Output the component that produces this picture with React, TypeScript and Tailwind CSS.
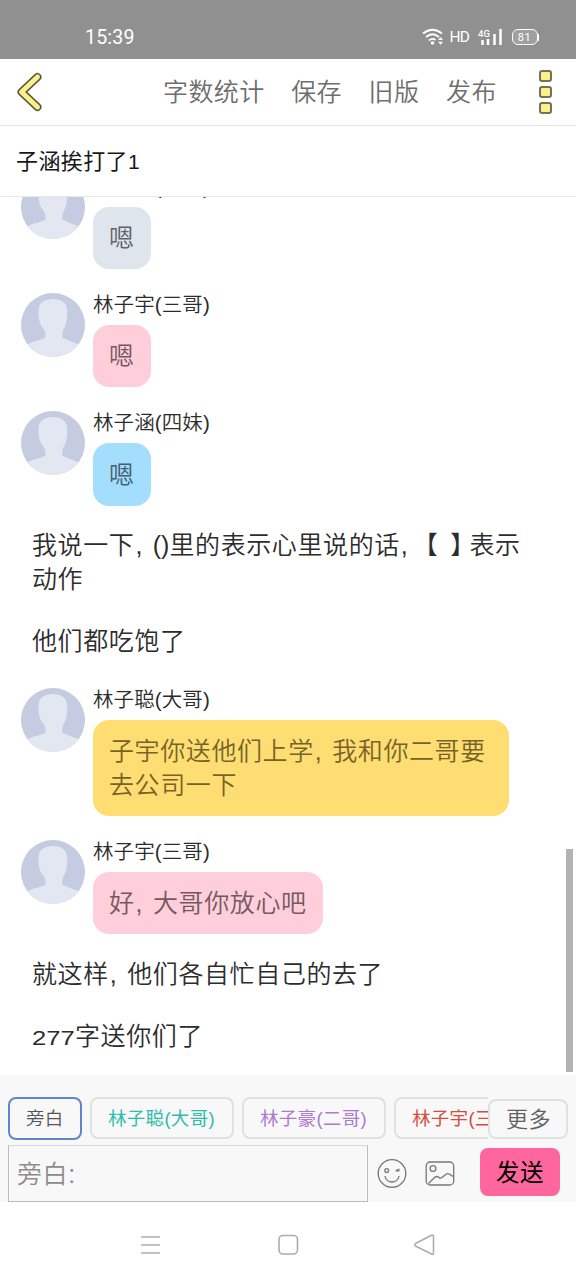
import React from "react";

const Comma = () => <span className="inline-block w-[18.4px] pl-[1px] tracking-normal">,</span>;

const Avatar = () => (
  <svg className="size-16 shrink-0" viewBox="0 0 64 64">
    <defs>
      <clipPath id="avatarDisc">
        <circle cx="32" cy="32" r="32" />
      </clipPath>
    </defs>
    <g clipPath="url(#avatarDisc)">
      <rect width="64" height="64" fill="#c5cce2" />
      <path
        d="M32 6C24 6 18 9.500 17.500 17C17.200 24 18.500 31 21.500 34.500C24.500 38 24.500 41 24.500 44.500C20 47.500 13 47.500 6 51.500V64H58V51.500C52 49 47 47.500 41.300 44.500C41.300 41 41.300 38 43.500 34.500C45.500 31 46.500 24 46.200 17C45.500 9.500 40 6 32 6Z"
        fill="#e3e7f2"
      />
    </g>
  </svg>
);

function Message({ name, tone, children }: { name: string; tone: string; children: React.ReactNode }) {
  return (
    <div className="flex gap-2 pl-[21px]">
      <Avatar />
      <div>
        <div className="h-8 text-[20.500px] leading-[24px] font-[350] tracking-[0.100px] text-[#2c2c2c]">{name}</div>
        <div
          className={`w-fit rounded-[16px] px-4 pt-[15.200px] pb-[13.600px] text-[25px] leading-[33.6px] font-[350] tracking-[0.6px] ${tone}`}
        >
          {children}
        </div>
      </div>
    </div>
  );
}

const Narration = ({ children }: { children: React.ReactNode }) => (
  <div className="-mb-px pt-px pl-8 text-[25px] leading-[33.6px] font-[350] tracking-[0.6px] whitespace-nowrap text-[#2c2c2c]">
    {children}
  </div>
);

function StatusBar() {
  return (
    <div className="flex h-[59px] shrink-0 items-center bg-[#909090] pt-[15px] pr-[36px] pl-[85px] text-white">
      <span className="pt-px font-[Roboto] text-[19.500px] leading-6 tracking-[0.2px]">15:39</span>
      <svg className="ml-auto h-[18px] w-[22px]" viewBox="0 0 22 18" fill="none" stroke="white" strokeWidth="1.8">
        <path d="M1 5.500Q10.500-2 20 5.500M4 9Q10.500 3.500 17 9M7 12.500Q10.500 9.500 13.500 12" />
        <circle cx="10.500" cy="15" r="1.800" fill="white" stroke="none" />
        <path d="M16 12L18.500 9L21 12ZM16 13.800L18.500 16.800L21 13.800Z" fill="white" stroke="none" />
      </svg>
      <span className="ml-[6px] w-[20px] font-[Roboto] text-[15.500px] leading-5 tracking-[-0.800px]">HD</span>
      <svg className="ml-[8px] h-[18px] w-[26px]" viewBox="0 0 26 18">
        <text x="0" y="8.500" fontFamily="Roboto" fontSize="9.500" fontWeight="500" fill="white">
          4G
        </text>
        <path d="M4.500 12V17M10 11V17M16.500 6V17M22.500 1V17" stroke="white" strokeWidth="2.500" />
      </svg>
      <div className="ml-[8px] flex h-[16px] w-[26px] items-center justify-center rounded-[6px] border-[1.500px] border-white bg-[#a0a0a0] font-[Roboto] text-[11px] leading-none tracking-[0.5px]">
        81
      </div>
      <div className="mr-px h-[7px] w-[1.500px] bg-white" />
    </div>
  );
}

function Header() {
  return (
    <div className="flex h-[67px] shrink-0 items-center border-b border-[#e6e6e6] pr-[22px] pl-[16px] text-[25px] font-[350] tracking-[0.400px] text-[#6e6e6e]">
      <svg className="h-[40px] w-[28px]" viewBox="0 0 28 40" fill="none" strokeLinecap="round" strokeLinejoin="round">
        <path d="M21.500 5L5.500 20L21.500 35" stroke="#5b573e" strokeWidth="8" />
        <path d="M21.500 5L5.500 20L21.500 35" stroke="#fbf18a" strokeWidth="5" />
      </svg>
      <div className="ml-[119px] flex gap-[26.600px] leading-8">
        <span>字数统计</span>
        <span>保存</span>
        <span>旧版</span>
        <span>发布</span>
      </div>
      <div className="ml-auto flex w-[18px] flex-col items-center gap-[4px]">
        <i className="h-[12px] w-[13px] rounded-[3px] border-2 border-[#757158] bg-[#fbf18a]" />
        <i className="h-[12px] w-[13px] rounded-[3px] border-2 border-[#757158] bg-[#fbf18a]" />
        <i className="h-[12px] w-[13px] rounded-[3px] border-2 border-[#757158] bg-[#fbf18a]" />
      </div>
    </div>
  );
}

function Composer() {
  return (
    <div className="h-[127px] shrink-0 bg-[#f8f8f8] pl-2">
      <div className="flex h-[70px] pt-[22px] pr-2">
        <div className="flex w-[480px] gap-2 overflow-hidden text-[18.500px] leading-[40px] tracking-[0.300px] whitespace-nowrap">
          <div className="h-[43px] w-[74px] shrink-0 rounded-[8px] border-2 border-[#6286ce] pl-[16px] font-[350] text-[#555]">旁白</div>
          <div className="h-[42px] w-[144px] shrink-0 rounded-[8px] border-2 border-[#e0e0e0] pl-[16px] text-[#2fbcad]">林子聪(大哥)</div>
          <div className="h-[42px] w-[144px] shrink-0 rounded-[8px] border-2 border-[#e0e0e0] pl-[16px] text-[#ae79cf]">林子豪(二哥)</div>
          <div className="h-[42px] w-[144px] shrink-0 rounded-[8px] border-2 border-[#e0e0e0] pl-[16px] text-[#d84b3d]">林子宇(三哥)</div>
        </div>
        <div className="mt-[2px] h-[40px] w-[80px] rounded-[8px] border-2 border-[#e0e0e0] pl-[16px] text-[22px] leading-[37px] font-[350] tracking-[0.500px] text-[#606060]">
          更多
        </div>
      </div>
      <div className="flex h-[57px]">
        <div className="h-[57px] w-[360px] border border-[#bcbcbc] border-t-[#d8d8d8] pl-[8px] text-[25px] leading-[57px] font-[350] tracking-[0.600px] text-[#8c8c8c]">
          旁白:
        </div>
        <svg className="mt-[13px] ml-[9px] size-[30px]" viewBox="0 0 30 30" fill="none" stroke="#777" strokeWidth="1.300">
          <circle cx="15" cy="15.500" r="13.800" />
          <circle cx="9.700" cy="12.500" r="1.900" />
          <path d="M22.500 11L18.800 12.800H22.500M8 18C9 26 21 26 22 18" />
        </svg>
        <svg className="mt-[13px] ml-[18px] size-[30px]" viewBox="0 0 30 30" fill="none" stroke="#777" strokeWidth="1.300">
          <rect x="1.200" y="4" width="27.500" height="23" rx="4" />
          <circle cx="8" cy="10.500" r="2.900" />
          <path d="M3.500 25.500L9.500 19.500Q12 17.500 14 19.500Q15.500 21 17.500 19L21.500 16Q23.500 14.500 28 18.500" />
        </svg>
        <button className="mt-[3px] ml-[25px] h-[48px] w-[80px] rounded-[8px] bg-[#ff669e] text-[23.500px] leading-[50px] tracking-[0.500px] text-black">
          发送
        </button>
      </div>
    </div>
  );
}

export default function App() {
  return (
    <div className="flex h-[1280px] w-[576px] flex-col overflow-hidden bg-white font-['Liberation_Sans','Noto_Sans_CJK_SC',sans-serif]">
      <StatusBar />
      <Header />
      <div className="h-[71px] shrink-0 border-b border-[#e8e8e8] pl-[16px] text-[22px] leading-[71px] tracking-[0.400px] text-[#181818]">
        子涵挨打了<span className="text-[21px]">1</span>
      </div>
      <div className="flex h-[878px] shrink-0 justify-between overflow-hidden">
        <div className="-mt-[22.400px] w-[540px]">
          <div className="flex flex-col gap-[24px]">
            <Message name="林子豪(二哥)" tone="bg-[#dfe5ed] text-[#606368]">嗯</Message>
            <Message name="林子宇(三哥)" tone="bg-[#fecfda] text-[#75585f]">嗯</Message>
            <Message name="林子涵(四妹)" tone="bg-[#a4defd] text-[#436070]">嗯</Message>
          </div>
          <div className="mt-[22.400px] mb-[30.600px] flex flex-col gap-[28.400px]">
            <Narration>
              我说一下
              <Comma />
              <span className="tracking-normal">()</span>里的表示心里说的话
              <Comma />
              <span className="inline-block w-[32px] pl-[7px] [font-feature-settings:'halt']">【</span>
              <span className="inline-block w-[19.200px] [font-feature-settings:'halt']">】</span>
              表示
              <br />
              动作
            </Narration>
            <Narration>他们都吃饱了</Narration>
          </div>
          <div className="mb-[22.400px] flex flex-col gap-[24px]">
            <Message name="林子聪(大哥)" tone="min-w-[416px] bg-[#fedd72] text-[#776328]">
              子宇你送他们上学
              <Comma />
              我和你二哥要
              <br />
              去公司一下
            </Message>
            <Message name="林子宇(三哥)" tone="bg-[#fecfda] text-[#75585f]">
              好
              <Comma />
              大哥你放心吧
            </Message>
          </div>
          <div className="flex flex-col gap-[28.400px]">
            <Narration>
              就这样
              <Comma />
              他们各自忙自己的去了
            </Narration>
            <Narration>
              <span className="inline-block w-[43px] origin-left scale-x-[1.220] text-[21px] tracking-normal">277</span>
              字送你们了
            </Narration>
          </div>
        </div>
        <div className="mt-[652px] mr-[3px] h-[223px] w-[7px] bg-[#b3b3b3]" />
      </div>
      <Composer />
      <div className="flex h-[78px] shrink-0 items-center pt-[8px] pl-[140px]">
        <svg className="size-[22px]" viewBox="0 0 22 22" stroke="#adadad" strokeWidth="1.600">
          <path d="M1 3H20M1 11H20M1 19H20" />
        </svg>
        <svg className="ml-[115px] size-[22px]" viewBox="0 0 22 22" fill="none" stroke="#adadad" strokeWidth="1.600">
          <rect x="2" y="1.500" width="18.500" height="18.500" rx="4" />
        </svg>
        <svg className="ml-[114px] size-[22px]" viewBox="0 0 22 22" fill="none" stroke="#adadad" strokeWidth="1.600" strokeLinejoin="round">
          <path d="M2.500 9.500L18.500 1.200Q20.500 .5 20.500 2.500V19Q20.500 21 18.500 20L2.500 12Q1 10.800 2.500 9.500Z" />
        </svg>
      </div>
    </div>
  );
}
